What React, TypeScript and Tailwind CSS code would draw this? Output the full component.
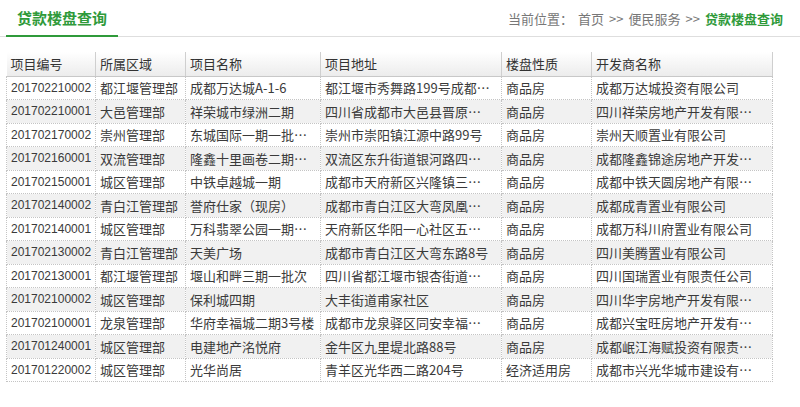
const ROWS: string[][] = [
  ['201702210002', '都江堰管理部', '成都万达城A-1-6', '都江堰市秀舞路199号成都…', '商品房', '成都万达城投资有限公司'],
  ['201702210001', '大邑管理部', '祥荣城市绿洲二期', '四川省成都市大邑县晋原…', '商品房', '四川祥荣房地产开发有限…'],
  ['201702170002', '崇州管理部', '东城国际一期一批…', '崇州市崇阳镇江源中路99号', '商品房', '崇州天顺置业有限公司'],
  ['201702160001', '双流管理部', '隆鑫十里画卷二期…', '双流区东升街道银河路四…', '商品房', '成都隆鑫锦途房地产开发…'],
  ['201702150001', '城区管理部', '中铁卓越城一期', '成都市天府新区兴隆镇三…', '商品房', '成都中铁天圆房地产有限…'],
  ['201702140002', '青白江管理部', '誉府仕家（现房）', '成都市青白江区大弯凤凰…', '商品房', '成都成青置业有限公司'],
  ['201702140001', '城区管理部', '万科翡翠公园一期…', '天府新区华阳一心社区五…', '商品房', '成都万科川府置业有限公司'],
  ['201702130002', '青白江管理部', '天美广场', '成都市青白江区大弯东路8号', '商品房', '四川美腾置业有限公司'],
  ['201702130001', '都江堰管理部', '堰山和畔三期一批次', '四川省都江堰市银杏街道…', '商品房', '四川国瑞置业有限责任公司'],
  ['201702100002', '城区管理部', '保利城四期', '大丰街道甫家社区', '商品房', '四川华宇房地产开发有限…'],
  ['201702100001', '龙泉管理部', '华府幸福城二期3号楼', '成都市龙泉驿区同安幸福…', '商品房', '成都兴宝旺房地产开发有…'],
  ['201701240001', '城区管理部', '电建地产洺悦府', '金牛区九里堤北路88号', '商品房', '成都岷江海赋投资有限责…'],
  ['201701220002', '城区管理部', '光华尚居', '青羊区光华西二路204号', '经济适用房', '成都市兴光华城市建设有…'],
];

const HEADERS = ['项目编号', '所属区域', '项目名称', '项目地址', '楼盘性质', '开发商名称'];
const WIDTHS = [89, 90, 135, 181, 90, 181];

export default function App() {
  return (
    <div className="h-[407px] w-[800px] overflow-hidden bg-white text-[#333] font-['Noto_Sans_CJK_SC','Liberation_Sans',sans-serif]">
      {/* title bar */}
      <div className="flex h-[37px] items-end justify-between border-b border-[#dedede]">
        <div className="ml-[6px] mb-[-1px] flex h-[36px] w-[112px] items-center border-b-2 border-[#2f9a3a] pb-[1px] pl-[11px] text-[15px] font-bold leading-none text-[#2f9a3a]">
          贷款楼盘查询
        </div>
        <div className="mr-[17px] flex h-[36px] items-center gap-[5px] text-[13px] leading-none text-[#777]">
          <span>当前位置：</span>
          <span>首页</span>
          <span>&gt;&gt;</span>
          <span>便民服务</span>
          <span>&gt;&gt;</span>
          <span className="font-bold text-[#2f9a3a]">贷款楼盘查询</span>
        </div>
      </div>

      <table className="ml-[6px] mt-[15px] table-fixed border-collapse text-[13px] leading-none">
        <colgroup>
          {WIDTHS.map((w, i) => <col key={i} style={{ width: w }} />)}
        </colgroup>
        <thead>
          <tr className="h-[24px] bg-gradient-to-b from-white to-[#ececec]">
            {HEADERS.map((h, i) => (
              <th key={h} className={`border-b border-[#c8c8c8] px-[4px] text-left font-normal text-[#333] ${i > 0 ? 'border-l border-l-[#cfcfcf]' : ''} ${i === 5 ? 'border-r border-r-[#cfcfcf]' : ''}`}>
                {h}
              </th>
            ))}
          </tr>
        </thead>
        <tbody>
          {ROWS.map((r, ri) => (
            <tr key={r[0]} className={`h-[23.5px] ${ri % 2 === 1 ? 'bg-[#f1f1f1]' : 'bg-white'}`}>
              {r.map((c, ci) => (
                <td
                  key={ci}
                  className={`overflow-hidden whitespace-nowrap border border-dotted border-[#c4c4c4] px-[4px] text-[#3a3a3a] ${ci === 0 ? "font-['Liberation_Sans',sans-serif] text-[12px]" : ''}`}
                >
                  {c}
                </td>
              ))}
            </tr>
          ))}
        </tbody>
      </table>
    </div>
  );
}
